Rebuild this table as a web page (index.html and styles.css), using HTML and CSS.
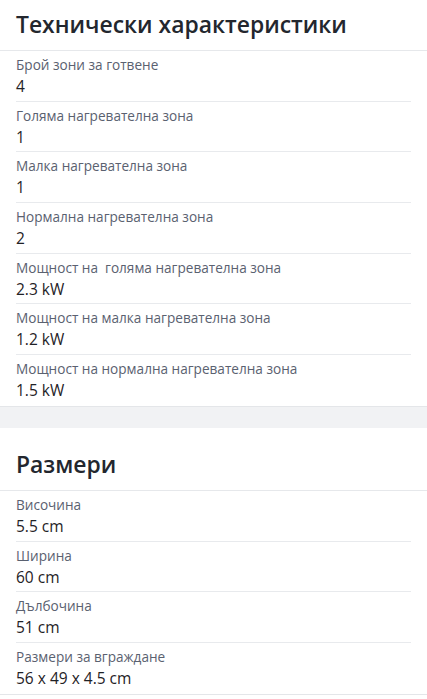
FILE: index.html
```html
<!DOCTYPE html>
<html lang="bg">
<head>
<meta charset="utf-8">
<title>Технически характеристики</title>
<link rel="stylesheet" href="styles.css">
</head>
<body>
<main class="page">
  <section class="spec-section spec-section--first">
    <h2 class="spec-title">Технически характеристики</h2>
    <dl class="spec-list">
      <div class="spec-row"><dt class="spec-label">Брой зони за готвене</dt><dd class="spec-value">4</dd></div>
      <div class="spec-row"><dt class="spec-label">Голяма нагревателна зона</dt><dd class="spec-value">1</dd></div>
      <div class="spec-row"><dt class="spec-label">Малка нагревателна зона</dt><dd class="spec-value">1</dd></div>
      <div class="spec-row"><dt class="spec-label">Нормална нагревателна зона</dt><dd class="spec-value">2</dd></div>
      <div class="spec-row"><dt class="spec-label">Мощност на&nbsp; голяма нагревателна зона</dt><dd class="spec-value">2.3 kW</dd></div>
      <div class="spec-row"><dt class="spec-label">Мощност на малка нагревателна зона</dt><dd class="spec-value">1.2 kW</dd></div>
      <div class="spec-row"><dt class="spec-label">Мощност на нормална нагревателна зона</dt><dd class="spec-value">1.5 kW</dd></div>
    </dl>
  </section>
  <div class="spacer"></div>
  <section class="spec-section">
    <h2 class="spec-title">Размери</h2>
    <dl class="spec-list">
      <div class="spec-row"><dt class="spec-label">Височина</dt><dd class="spec-value">5.5 cm</dd></div>
      <div class="spec-row"><dt class="spec-label">Ширина</dt><dd class="spec-value">60 cm</dd></div>
      <div class="spec-row"><dt class="spec-label">Дълбочина</dt><dd class="spec-value">51 cm</dd></div>
      <div class="spec-row"><dt class="spec-label">Размери за вграждане</dt><dd class="spec-value">56 x 49 x 4.5 cm</dd></div>
    </dl>
  </section>
</main>
</body>
</html>
```
FILE: styles.css
```css
html, body {
  margin: 0;
  padding: 0;
  background: #ffffff;
}
body {
  font-family: "Open Sans", "Noto Sans", sans-serif;
  color: #23262b;
}
.page {
  display: flex;
  flex-direction: column;
}
.spec-section {
  background: #ffffff;
  border-bottom: 1px solid #e4e6e9;
}
.spec-section--first {
  margin-top: -12px;
}
.spec-title {
  margin: 0;
  padding: 21px 16px 9px;
  font-size: 22.9px;
  line-height: 32px;
  font-weight: 600;
  color: #23272e;
  border-bottom: 1px solid #e6e8eb;
}
.spec-list {
  margin: 0;
  padding: 0;
  display: flex;
  flex-direction: column;
}
.spec-row {
  margin: 0 16px;
  padding: 5px 0 2.7px;
  border-bottom: 1px solid #e8eaed;
  display: flex;
  flex-direction: column;
}
.spec-row:last-child {
  border-bottom: none;
  padding-bottom: 3.7px;
}
.spec-label {
  margin: 0;
  font-size: 13.6px;
  line-height: 18px;
  color: #5a6170;
}
.spec-value {
  margin: 0;
  padding-top: 1px;
  font-size: 15.5px;
  line-height: 23px;
  color: #1f2226;
}
.spacer {
  height: 21px;
  background: #f1f2f4;
}
```
